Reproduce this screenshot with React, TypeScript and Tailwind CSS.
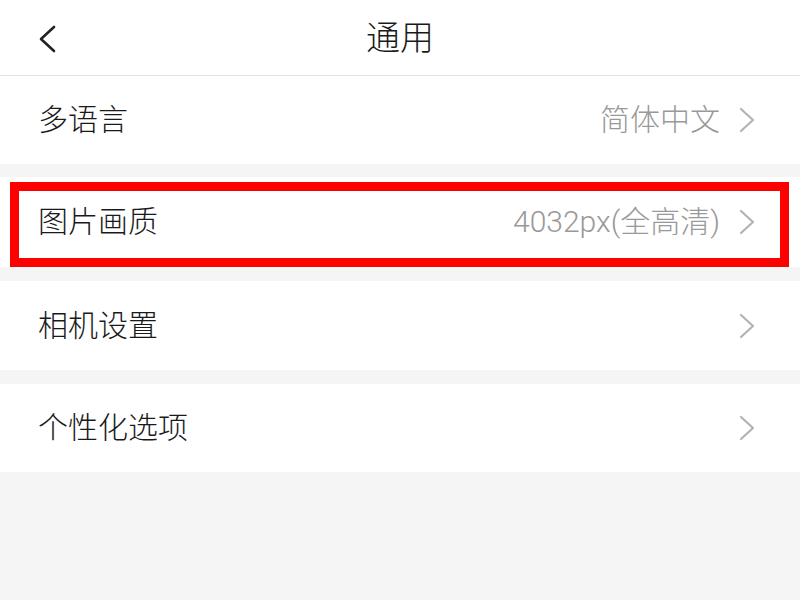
import React from "react";

const Chevron = () => (
  <svg width="18" height="28" viewBox="0 0 18 28" fill="none" className="shrink-0">
    <polyline points="3,3 15,14 3,25" stroke="#b3b3b3" strokeWidth="2.2" strokeLinecap="round" strokeLinejoin="round" />
  </svg>
);

const Row = ({ label, value, h }: { label: string; value?: string; h: string }) => (
  <div className={`flex items-center justify-between bg-white pl-[38px] pr-[44px] ${h}`}>
    <span className="text-[30px] font-light leading-none text-[#1a1a1a]">{label}</span>
    <div className="flex items-center gap-[18px]">
      {value && <span className="text-[30px] font-light leading-none text-[#999]">{value}</span>}
      <Chevron />
    </div>
  </div>
);

export default function App() {
  return (
    <div
      className="w-[800px] h-[600px] bg-[#f5f5f5] overflow-hidden"
      style={{ fontFamily: 'Roboto, "Noto Sans CJK SC", sans-serif' }}
    >
      <div className="relative flex h-[76px] items-center justify-center bg-white border-b border-[#e2e2e2]">
        <svg width="22" height="30" viewBox="0 0 22 30" fill="none" className="absolute left-[36px] top-[24px]">
          <polyline points="18,3 5,15 18,27" stroke="#222" strokeWidth="2.6" strokeLinecap="round" strokeLinejoin="round" />
        </svg>
        <span className="text-[34px] font-light leading-none text-[#1a1a1a]">通用</span>
      </div>
      <Row label="多语言" value="简体中文" h="h-[88px]" />
      <div className="h-[13px]" />
      <div className="relative">
        <Row label="图片画质" value="4032px(全高清)" h="h-[90px]" />
        <div className="absolute left-[10px] right-[11px] top-[5px] bottom-0 border-[9px] border-[#ff0000]" />
      </div>
      <div className="h-[14px]" />
      <Row label="相机设置" h="h-[89px]" />
      <div className="h-[14px]" />
      <Row label="个性化选项" h="h-[88px]" />
    </div>
  );
}
